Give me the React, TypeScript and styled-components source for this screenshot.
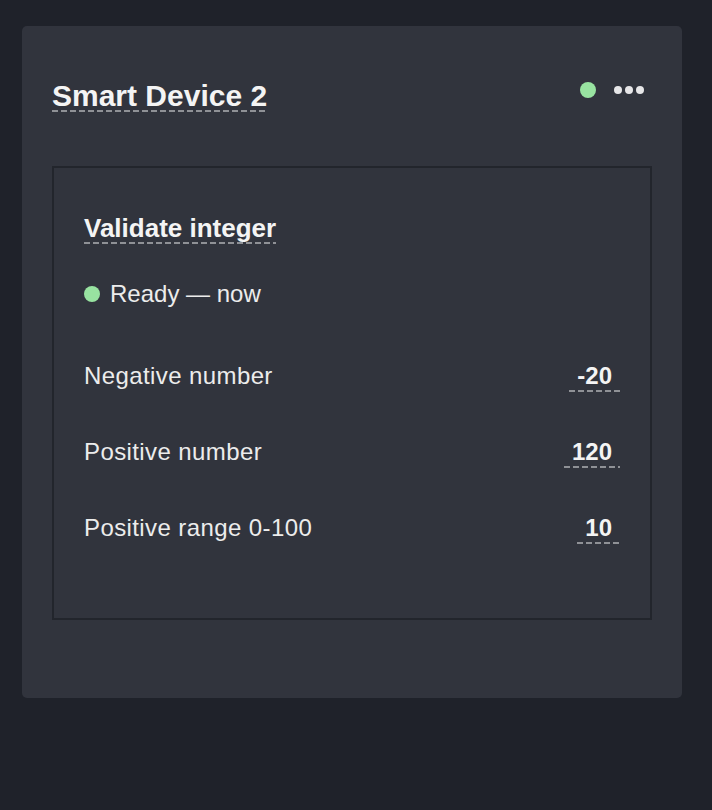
import styled, { createGlobalStyle, css } from "styled-components";

const GlobalStyle = createGlobalStyle`
    html, body {
        margin: 0;
        padding: 0;
        background: #1f222a;
    }
    body {
        font-family: "Liberation Sans", Arial, Helvetica, sans-serif;
        color: #f2f2f2;
    }
`

// dashed underline drawn as a gradient so the dashes are longer than a css dashed border
const dashed = css`
    background-image: linear-gradient(to right, #8f9196 6px, transparent 6px);
    background-size: 9px 2px;
    background-repeat: repeat-x;
    background-position: left bottom;
`

const Page = styled.div`
    min-height: 810px;
    box-sizing: border-box;
    padding: 26px 30px 112px 22px;
    background: #1f222a;
`

const Card = styled.div`
    background: #31343d;
    border-radius: 5px;
    padding: 55px 30px 78px;
`

const Header = styled.div`
    display: flex;
    justify-content: space-between;
    align-items: flex-start;
    margin-bottom: 54px;
`

const Title = styled.h1`
    margin: 0;
    font-size: 30px;
    line-height: 30px;
    padding-bottom: 1px;
    font-weight: 700;
    color: #f4f4f4;
    ${dashed}
`

const Actions = styled.div`
    display: flex;
    align-items: center;
    gap: 18px;
    height: 16px;
    margin-top: 1px;
    margin-right: 8px;
`

const Dot = styled.span<{ $size: number }>`
    display: inline-block;
    width: ${(p) => p.$size}px;
    height: ${(p) => p.$size}px;
    border-radius: 50%;
    background: #98e3a1;
`

const Menu = styled.button`
    display: flex;
    gap: 3px;
    padding: 0;
    border: none;
    background: none;
    cursor: pointer;

    span {
        width: 8px;
        height: 8px;
        border-radius: 50%;
        background: #e6e6e8;
    }
`

const Panel = styled.div`
    border: 2px solid #22252c;
    padding: 45px 30px 38px;
`

const Subtitle = styled.h2`
    display: inline-block;
    margin: 0;
    font-size: 26px;
    line-height: 30px;
    padding-bottom: 1px;
    font-weight: 700;
    color: #f4f4f4;
    ${dashed}
`

const Status = styled.div`
    display: flex;
    align-items: center;
    gap: 10px;
    margin-top: 36px;
    height: 28px;
    font-size: 24px;
    color: #ececec;
`

const List = styled.div`
    margin-top: 44px;
    display: flex;
    flex-direction: column;
`

const Row = styled.div`
    display: flex;
    justify-content: space-between;
    align-items: baseline;
    height: 76px;
    padding-top: 10px;
    box-sizing: border-box;
`

const Label = styled.span`
    font-size: 24px;
    line-height: 28px;
    letter-spacing: 0.4px;
    color: #ececec;
`

const Value = styled.span`
    font-size: 24px;
    line-height: 28px;
    font-weight: 700;
    color: #f4f4f4;
    padding: 0 8px 2px;
    ${dashed}
`

const rows = [
    { label: "Negative number", value: "-20" },
    { label: "Positive number", value: "120" },
    { label: "Positive range 0-100", value: "10" },
]

export default function App() {
    return (
        <Page>
            <GlobalStyle />
            <Card>
                <Header>
                    <Title>Smart Device 2</Title>
                    <Actions>
                        <Dot $size={16} />
                        <Menu aria-label="more">
                            <span />
                            <span />
                            <span />
                        </Menu>
                    </Actions>
                </Header>
                <Panel>
                    <Subtitle>Validate integer</Subtitle>
                    <Status>
                        <Dot $size={16} />
                        Ready — now
                    </Status>
                    <List>
                        {rows.map((r) => (
                            <Row key={r.label}>
                                <Label>{r.label}</Label>
                                <Value>{r.value}</Value>
                            </Row>
                        ))}
                    </List>
                </Panel>
            </Card>
        </Page>
    )
}
